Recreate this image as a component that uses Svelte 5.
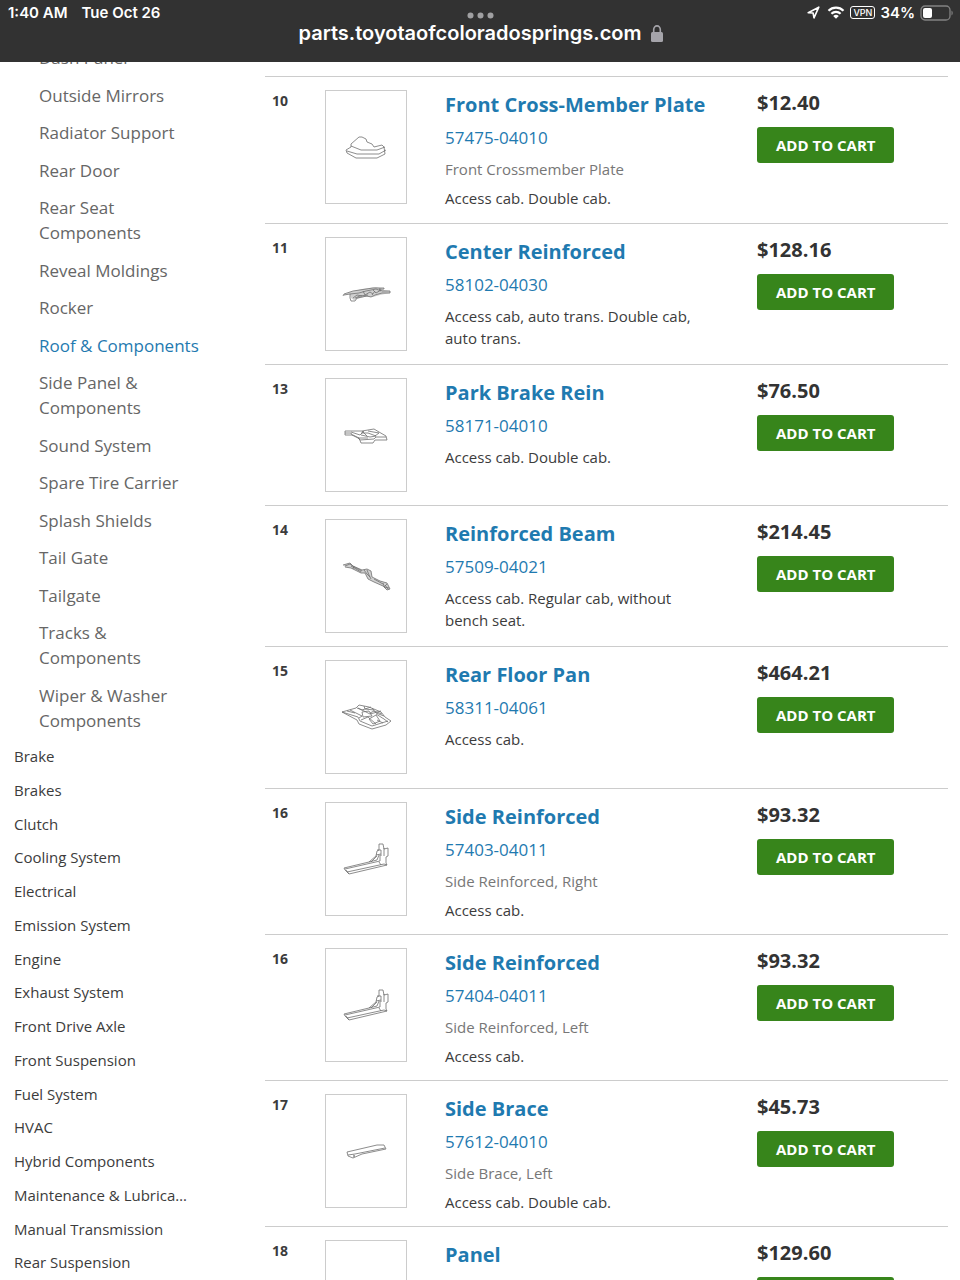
<script>
  const subcategories = [
    'Dash Panel',
    'Outside Mirrors',
    'Radiator Support',
    'Rear Door',
    'Rear Seat Components',
    'Reveal Moldings',
    'Rocker',
    'Roof & Components',
    'Side Panel & Components',
    'Sound System',
    'Spare Tire Carrier',
    'Splash Shields',
    'Tail Gate',
    'Tailgate',
    'Tracks & Components',
    'Wiper & Washer Components',
  ];

  const categories = [
    'Brake',
    'Brakes',
    'Clutch',
    'Cooling System',
    'Electrical',
    'Emission System',
    'Engine',
    'Exhaust System',
    'Front Drive Axle',
    'Front Suspension',
    'Fuel System',
    'HVAC',
    'Hybrid Components',
    'Maintenance & Lubrication',
    'Manual Transmission',
    'Rear Suspension',
  ];

  const parts = [
    { ref: 10, name: 'Front Cross-Member Plate', sku: '57475-04010', label: 'Front Crossmember Plate', fit: 'Access cab. Double cab.', price: '$12.40', art: 'plate' },
    { ref: 11, name: 'Center Reinforced', sku: '58102-04030', fit: 'Access cab, auto trans. Double cab, auto trans.', price: '$128.16', art: 'center' },
    { ref: 13, name: 'Park Brake Rein', sku: '58171-04010', fit: 'Access cab. Double cab.', price: '$76.50', art: 'brake' },
    { ref: 14, name: 'Reinforced Beam', sku: '57509-04021', fit: 'Access cab. Regular cab, without bench seat.', price: '$214.45', art: 'beam' },
    { ref: 15, name: 'Rear Floor Pan', sku: '58311-04061', fit: 'Access cab.', price: '$464.21', art: 'pan' },
    { ref: 16, name: 'Side Reinforced', sku: '57403-04011', label: 'Side Reinforced, Right', fit: 'Access cab.', price: '$93.32', art: 'side' },
    { ref: 16, name: 'Side Reinforced', sku: '57404-04011', label: 'Side Reinforced, Left', fit: 'Access cab.', price: '$93.32', art: 'side' },
    { ref: 17, name: 'Side Brace', sku: '57612-04010', label: 'Side Brace, Left', fit: 'Access cab. Double cab.', price: '$45.73', art: 'brace' },
    { ref: 18, name: 'Panel', price: '$129.60' },
  ];

  // shade is the filled silhouette, lines the strokes over it
  const drawings = {
    plate: {
      shade: '',
      lines: 'M21 60l5-3 0-3 8-7 3 0 4 2 1 3 5 2 2 3 4-1 4-1 2 2 1 7-8 4H31l-9-5zM26 56l10 4h16l8-3M22 61l10 3h22l7-4',
    },
    center: {
      shade: 'M18 58l7-3 12-3 14-2 4 1 4 2 6 1v2l-10 2-7 2-9 0-10 3-3-2-1-4z',
      lines: 'M18 59l1-2 9-3 20-3 11 0 0 1-5 0 3 2 8 0v2l-8 0-7 2-4 2-4-1-10 2-2 3-4 0-1-3 0-4-6 1M25 57l9-1 7-2 10-2 5 2M28 61l4-3 5 1M38 54l2 4 5-3 3 2M48 53l3 3 5-3M30 61l5-2 8-1M47 58l3-4',
    },
    brake: {
      shade: '',
      lines: 'M20 53h17l12-2 5 3 7 4 1 4-12 0-2 3H36l-2-5-6-3-8 0zM20 55l6 0 1 2 6 3 2 2 14-1 2-2 10 0M26 54l9 3 4-4M36 57l9 2 6-1-8-3-7 0M37 53l5 5M43 53l11 2-4 3M33 60h10',
    },
    beam: {
      shade: 'M18 46l7-2 3 3 9 4 5-1 4 2 1 6 8 4 7 2 3 6-3 1-4-4-9-4-6-3-3-6-4 0-10-5-6-1z',
      lines: 'M18 46l7-2 3 3 9 4 5-1 4 2 1 6 8 4 7 2 3 6-3 1-4-4-9-4-6-3-3-6-4 0-10-5-6-1M20 47l5-2 4 3 8 4M26 47l10 6M29 47l-1 3M39 51l3 4 3 3M42 51l2 5 2 4M49 60l9 5M58 64l1 3M62 65l-3 3 5 1M60 66l3 4',
    },
    pan: {
      shade: '',
      lines: 'M17 52l14-4 3-3 10 2 12 5 4 5 6 4-5 4-14 4-13-5-2-4zM17 52l16 5 2 4 12 5 16-5M32 48l5 2 9-3M25 50l12 6-3 2M33 48l12 6 11-3M37 52l7-1 3 5-9 1zM47 48l4 5 8 3M44 59l7-4 4 6-7 3zM51 54l8 5 4 3M36 60l7-3 8 7M52 60l6 3M22 51l8 2M39 46l1 3 9 1M45 53l4-2 8 3',
    },
    side: {
      shade: '',
      lines: 'M19 66l25-6 7-6 1-5 2-1 0-6 4 0 1 5 4-1 0 8-2 1 0 6 1 2-38 9-4-4zM20 67l35-8 0-6M22 70l37-8 3 1M24 72l-3-4M44 60l8-2 2-5M52 48h4v6M59 46v8M54 60l2 3M51 53l5-1M46 60l6-6',
    },
    brace: {
      shade: '',
      lines: 'M22 58l30-7 7 0 2 4-24 5-9 4-5-2zM23 61l7-1 30-6M28 61l2 1-2 1',
    },
  };
</script>

<div class="screen">
  <header>
    <div class="status">
      <div class="clock"><span>1:40 AM</span><span>Tue Oct 26</span></div>
      <div class="indicators">
        <svg width="13" height="13" viewBox="0 0 13 13" aria-hidden="true">
          <path d="M1.2 6.7 11.8 1.2 7 11.8 6.1 7z" fill="none" stroke="#fff" stroke-width="1.6" stroke-linejoin="round" />
        </svg>
        <svg class="wifi" width="18" height="13" viewBox="0 0 18 13" aria-hidden="true">
          <path d="M1.5 4.8a10.6 10.6 0 0 1 15 0M4.4 7.8a6.5 6.5 0 0 1 9.2 0" fill="none" stroke="#fff" stroke-width="2.2" />
          <path d="M9 12.8 6.2 10a4 4 0 0 1 5.6 0z" fill="#fff" />
        </svg>
        <span class="vpn">VPN</span>
        <span>34%</span>
        <svg width="33" height="16" viewBox="0 0 33 16" aria-hidden="true">
          <rect x="1" y="1" width="29" height="14" rx="4" fill="none" stroke="#828282" stroke-width="1.3" />
          <rect x="3" y="3" width="9" height="10" rx="2" fill="#fff" />
          <path d="M31.5 5.5v5c1.6-.8 1.6-4.2 0-5z" fill="#828282" />
        </svg>
      </div>
    </div>
    <div class="address">
      <svg width="27" height="7" viewBox="0 0 27 7" aria-hidden="true">
        <g fill="#a0a0a2">
          <circle cx="3.5" cy="3.5" r="3" />
          <circle cx="13.5" cy="3.5" r="3" />
          <circle cx="23.5" cy="3.5" r="3" />
        </g>
      </svg>
      <div class="url">
        <span>parts.toyotaofcoloradosprings.com</span>
        <svg width="12" height="17" viewBox="0 0 12 17" aria-hidden="true">
          <path d="M2.7 8V4.6a3.3 3.7 0 0 1 6.6 0V8" fill="none" stroke="#a5a4aa" stroke-width="1.6" />
          <rect x="0" y="7" width="12" height="10" rx="1.5" fill="#a5a4aa" />
        </svg>
      </div>
    </div>
  </header>

  <div class="content">
    <nav aria-label="Part categories">
      <ul class="sub">
        {#each subcategories as item}
          <li><a href="#parts" class:active={item === 'Roof & Components'}>{item}</a></li>
        {/each}
      </ul>
      <ul class="top">
        {#each categories as item}
          <li><a href="#parts">{item}</a></li>
        {/each}
      </ul>
    </nav>

    <main id="parts">
      {#each parts as part}
        <article>
          <span class="ref">{part.ref}</span>
          <a class="thumb" href="#parts" aria-label={part.name}>
            {#if part.art}
              <svg viewBox="1 1 80 112" aria-hidden="true">
                <path d={drawings[part.art].shade} fill="#d0d0d0" />
                <path d={drawings[part.art].lines} fill="none" stroke="#707070" stroke-width="0.8" stroke-linejoin="round" />
              </svg>
            {/if}
          </a>
          <div class="info">
            <h2><a href="#parts">{part.name}</a></h2>
            {#if part.sku}
              <a class="sku" href="#parts">{part.sku}</a>
            {/if}
            {#if part.label}
              <p class="label">{part.label}</p>
            {/if}
            {#if part.fit}
              <p>{part.fit}</p>
            {/if}
          </div>
          <div class="buy">
            <strong>{part.price}</strong>
            <button type="button">ADD TO CART</button>
          </div>
        </article>
      {/each}
    </main>
  </div>
</div>

<style>
  :global(body) {
    margin: 0;
    background: #fff;
  }

  .screen {
    height: 100vh;
    overflow: hidden;
    font-family: 'Open Sans', 'Noto Sans', sans-serif;
    color: #3c3c3c;
  }

  header {
    position: relative;
    z-index: 1;
    box-sizing: border-box;
    height: 62px;
    padding: 4px 7px 0 8px;
    background: #323232;
    color: #fff;
    font-family: Inter, sans-serif;
    font-weight: 600;
  }

  .status,
  .clock,
  .indicators,
  .url {
    display: flex;
    align-items: center;
  }

  .status {
    justify-content: space-between;
    height: 17px;
    font-size: 15px;
  }

  .clock {
    gap: 14px;
  }

  .indicators {
    gap: 5px;
  }

  .wifi {
    margin-left: 2px;
  }

  .vpn {
    padding: 0 2px;
    border: 1px solid #fff;
    border-radius: 3px;
    font-size: 9px;
    line-height: 11px;
    font-weight: 500;
  }

  .address {
    display: flex;
    flex-direction: column;
    align-items: center;
    margin-top: -9px;
  }

  .url {
    gap: 9px;
    font-size: 20px;
    line-height: 28px;
  }

  .content {
    display: flex;
    gap: 61px;
    padding: 0 12px 0 14px;
  }

  nav {
    flex: none;
    width: 190px;
    margin-top: -23px;
  }

  ul {
    margin: 0;
    padding: 0;
    list-style: none;
  }

  a {
    color: inherit;
    text-decoration: none;
  }

  .sub {
    padding-left: 25px;
    color: #666;
    font-size: 17px;
    line-height: 25px;
  }

  .sub li {
    padding: 6px 0;
  }

  .sub li:nth-child(even) {
    padding-top: 7px;
  }

  .sub .active {
    color: #1f7ab0;
  }

  .top {
    width: 173px;
    font-size: 15px;
    line-height: 34px;
  }

  .top li {
    overflow: hidden;
    text-overflow: ellipsis;
    white-space: nowrap;
  }

  .top li:nth-child(4n) {
    line-height: 33px;
  }

  main {
    flex: 1;
    margin-top: 14px;
  }

  article {
    display: grid;
    grid-template-columns: 60px 82px 1fr 191px;
    align-items: start;
    padding: 13px 0;
    border-top: 1px solid #ccc;
  }

  article:nth-child(4n + 1) {
    padding-bottom: 14px;
  }

  .ref {
    padding-left: 7px;
    font-size: 14px;
    line-height: 22px;
    font-weight: 700;
  }

  .thumb {
    display: block;
    box-sizing: border-box;
    height: 114px;
    border: 1px solid #ccc;
  }

  .thumb svg {
    display: block;
    width: 100%;
    height: 100%;
  }

  .info {
    padding: 0 44px 0 38px;
    font-size: 15px;
    line-height: 22px;
  }

  h2 {
    margin: 0;
    font-size: 20px;
    line-height: 30px;
    font-weight: 700;
    color: #1f7ab0;
  }

  .sku {
    display: block;
    margin: 6px 0 8px;
    color: #1f7ab0;
    font-size: 17px;
    line-height: 24px;
    font-weight: 500;
  }

  p {
    margin: 0;
  }

  .label {
    margin-bottom: 7px;
    color: #777;
  }

  .buy {
    display: flex;
    flex-direction: column;
    align-items: flex-start;
    gap: 11px;
  }

  .buy strong {
    font-size: 20px;
    line-height: 26px;
    color: #333;
  }

  button {
    padding: 0 19px;
    border: 0;
    border-radius: 3px;
    background: #37851b;
    color: #fff;
    font: inherit;
    font-size: 15px;
    line-height: 36px;
    font-weight: 700;
  }
</style>
